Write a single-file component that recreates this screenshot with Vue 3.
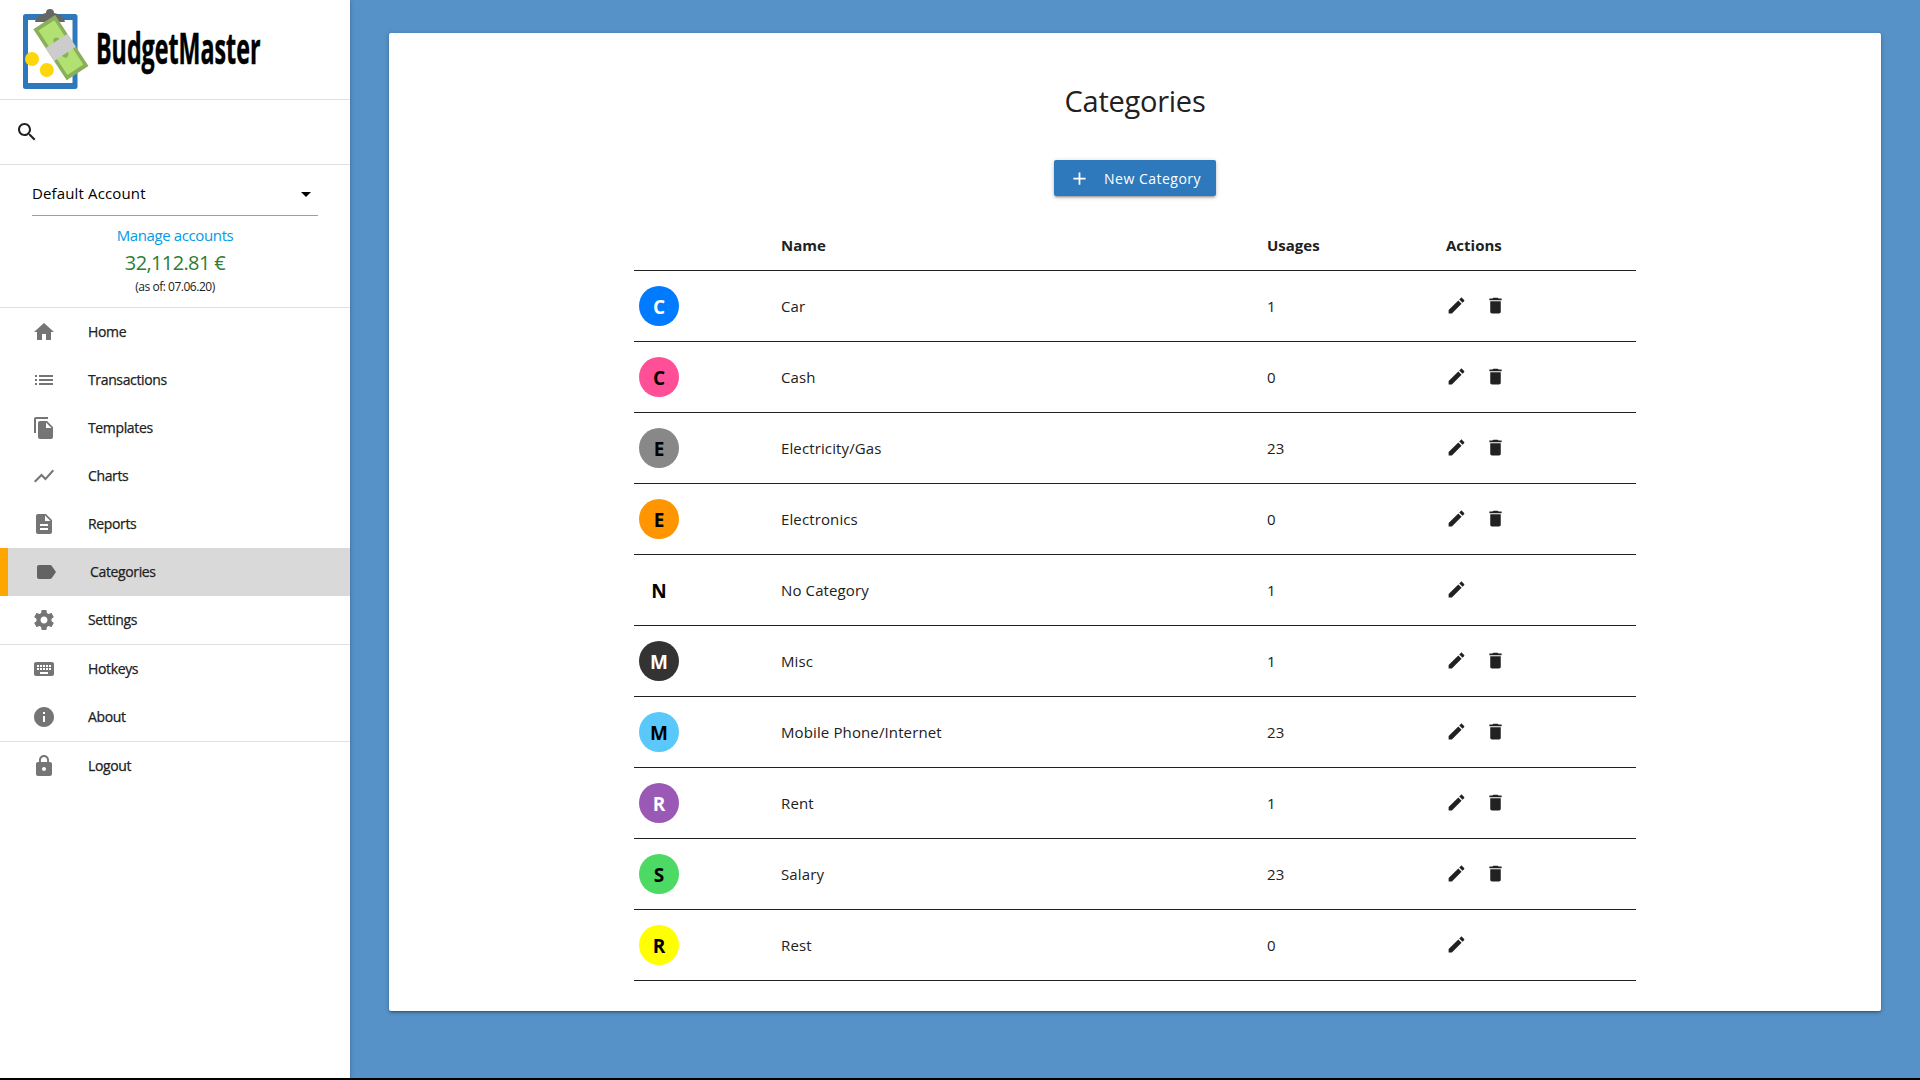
<script setup>
const nav = [
  [
    { label: 'Home', d: 'M10 20v-6h4v6h5v-8h3L12 3 2 12h3v8z' },
    { label: 'Transactions', d: 'M3 13h2v-2H3v2zm0 4h2v-2H3v2zm0-8h2V7H3v2zm4 4h14v-2H7v2zm0 4h14v-2H7v2zM7 7v2h14V7H7z' },
    { label: 'Templates', d: 'M16 1H4c-1.1 0-2 .9-2 2v14h2V3h12V1zm-1 4l6 6v10c0 1.1-.9 2-2 2H7.99C6.89 23 6 22.1 6 21l.01-14c0-1.1.89-2 1.99-2h7zm-1 7h5.5L14 6.5V12z' },
    { label: 'Charts', d: 'M3.5 18.49l6-6.01 4 4L22 6.92l-1.41-1.41-7.09 7.97-4-4L2 16.99z' },
    { label: 'Reports', d: 'M14 2H6c-1.1 0-1.99.9-1.99 2L4 20c0 1.1.89 2 1.99 2H18c1.1 0 2-.9 2-2V8l-6-6zm2 16H8v-2h8v2zm0-4H8v-2h8v2zm-3-5V3.5L18.5 9H13z' },
    { label: 'Categories', active: true, d: 'M17.63 5.84C17.27 5.33 16.67 5 16 5L5 5.01C3.9 5.01 3 5.9 3 7v10c0 1.1.9 1.99 2 1.99L16 19c.67 0 1.27-.33 1.63-.84L22 12l-4.37-6.16z' },
    { label: 'Settings', d: 'M19.43 12.98c.04-.32.07-.64.07-.98s-.03-.66-.07-.98l2.11-1.65c.19-.15.24-.42.12-.64l-2-3.46c-.12-.22-.39-.3-.61-.22l-2.49 1c-.52-.4-1.08-.73-1.69-.98l-.38-2.65C14.46 2.18 14.25 2 14 2h-4c-.25 0-.46.18-.49.42l-.38 2.65c-.61.25-1.17.59-1.69.98l-2.49-1c-.23-.09-.49 0-.61.22l-2 3.46c-.13.22-.07.49.12.64l2.11 1.65c-.04.32-.07.65-.07.98s.03.66.07.98l-2.11 1.65c-.19.15-.24.42-.12.64l2 3.46c.12.22.39.3.61.22l2.49-1c.52.4 1.08.73 1.69.98l.38 2.65c.03.24.24.42.49.42h4c.25 0 .46-.18.49-.42l.38-2.65c.61-.25 1.17-.59 1.69-.98l2.49 1c.23.09.49 0 .61-.22l2-3.46c.12-.22.07-.49-.12-.64l-2.11-1.65zM12 15.5c-1.93 0-3.5-1.57-3.5-3.5s1.57-3.5 3.5-3.5 3.5 1.57 3.5 3.5-1.57 3.5-3.5 3.5z' }
  ],
  [
    { label: 'Hotkeys', d: 'M20 5H4c-1.1 0-1.99.9-1.99 2L2 17c0 1.1.9 2 2 2h16c1.1 0 2-.9 2-2V7c0-1.1-.9-2-2-2zm-9 3h2v2h-2V8zm0 3h2v2h-2v-2zM8 8h2v2H8V8zm0 3h2v2H8v-2zm-1 2H5v-2h2v2zm0-3H5V8h2v2zm9 7H8v-2h8v2zm0-4h-2v-2h2v2zm0-3h-2V8h2v2zm3 3h-2v-2h2v2zm0-3h-2V8h2v2z' },
    { label: 'About', d: 'M12 2C6.48 2 2 6.48 2 12s4.48 10 10 10 10-4.48 10-10S17.52 2 12 2zm1 15h-2v-6h2v6zm0-8h-2V7h2v2z' }
  ],
  [
    { label: 'Logout', d: 'M18 8h-1V6c0-2.76-2.24-5-5-5S7 3.24 7 6v2H6c-1.1 0-2 .9-2 2v10c0 1.1.9 2 2 2h12c1.1 0 2-.9 2-2V10c0-1.1-.9-2-2-2zm-6 9c-1.1 0-2-.9-2-2s.9-2 2-2 2 .9 2 2-.9 2-2 2zm3.1-9H8.9V6c0-1.71 1.39-3.1 3.1-3.1s3.1 1.39 3.1 3.1v2z' }
  ]
]
const categories = [
  { name: 'Car', usages: 1, color: '#007aff', text: '#fff', removable: true },
  { name: 'Cash', usages: 0, color: '#ff5097', text: '#000', removable: true },
  { name: 'Electricity/Gas', usages: 23, color: '#888888', text: '#000', removable: true },
  { name: 'Electronics', usages: 0, color: '#ff9500', text: '#000', removable: true },
  { name: 'No Category', usages: 1, color: '#ffffff', text: '#000', removable: false },
  { name: 'Misc', usages: 1, color: '#333333', text: '#fff', removable: true },
  { name: 'Mobile Phone/Internet', usages: 23, color: '#5ac8fa', text: '#000', removable: true },
  { name: 'Rent', usages: 1, color: '#9b59b6', text: '#fff', removable: true },
  { name: 'Salary', usages: 23, color: '#4cd964', text: '#000', removable: true },
  { name: 'Rest', usages: 0, color: '#ffff00', text: '#000', removable: false }
]
</script>

<template>
  <div class="app">
    <aside class="sidebar">
      <div class="brand">
        <svg class="logo" width="350" height="99" viewBox="0 0 350 99">
          <rect x="23" y="14" width="54.500" height="75" rx="2.500" fill="#2e79bb" />
          <rect x="28" y="20" width="44.500" height="63" fill="#fff" />
          <path d="M35 22c1-5 5-8 11-9a4 4 0 0 1 8 0c6 1 10 4 11 9z" fill="#666" />
          <g transform="translate(60.900 47.600) rotate(-33.100)">
            <rect x="-13" y="-30.500" width="26" height="61" fill="#8bae5a" />
            <rect x="-9.500" y="-26.500" width="19" height="53" fill="#b1e172" />
            <ellipse cx="0" cy="0" rx="5" ry="11.500" fill="#8bae5a" />
            <rect x="-13" y="-8" width="26" height="15.500" fill="#ccc" />
          </g>
          <circle cx="32" cy="59" r="7" fill="#ffd60b" />
          <circle cx="46.800" cy="70" r="7" fill="#ffd60b" />
          <text transform="translate(96 64) scale(.541 1)" class="wordmark">BudgetMaster</text>
        </svg>
      </div>
      <div class="search">
        <svg width="24" height="24" viewBox="0 0 24 24"><path d="M15.500 14h-.79l-.28-.27C15.410 12.590 16 11.110 16 9.500 16 5.910 13.090 3 9.500 3S3 5.910 3 9.500 5.910 16 9.500 16c1.610 0 3.090-.59 4.230-1.570l.27.28v.79l5 4.990L20.490 19l-4.990-5zm-6 0C7.010 14 5 11.990 5 9.500S7.010 5 9.500 5 14 7.010 14 9.500 11.990 14 9.500 14z" /></svg>
      </div>
      <div class="account">
        <div class="select"><span>Default Account</span><svg width="24" height="24" viewBox="0 0 24 24"><path d="M7 10l5 5 5-5z" /></svg></div>
        <a class="manage">Manage accounts</a>
        <div class="balance">32,112.81 €</div>
        <div class="date">(as of: 07.06.20)</div>
      </div>
      <nav>
        <ul v-for="(group, i) in nav" :key="i">
          <li v-for="item in group" :key="item.label" :class="{ active: item.active }">
            <svg width="24" height="24" viewBox="0 0 24 24"><path :d="item.d" /></svg>
            <span>{{ item.label }}</span>
          </li>
        </ul>
      </nav>
    </aside>
    <main>
      <section class="card">
        <h1>Categories</h1>
        <button class="new"><svg width="21" height="21" viewBox="0 0 24 24"><path d="M19 13h-6v6h-2v-6H5v-2h6V5h2v6h6v2z" /></svg><span>New Category</span></button>
        <table>
          <thead><tr><th class="c-icon"></th><th class="c-name">Name</th><th class="c-use">Usages</th><th>Actions</th></tr></thead>
          <tbody>
            <tr v-for="cat in categories" :key="cat.name">
              <td><div class="circle" :style="{ background: cat.color, color: cat.text }">{{ cat.name[0] }}</div></td>
              <td>{{ cat.name }}</td>
              <td>{{ cat.usages }}</td>
              <td>
                <div class="actions">
                  <svg width="21" height="21" viewBox="0 0 24 24"><path d="M3 17.250V21h3.750L17.810 9.940l-3.750-3.750L3 17.250zM20.710 7.040c.39-.39.39-1.020 0-1.410l-2.340-2.340c-.39-.39-1.020-.39-1.410 0l-1.830 1.830 3.750 3.750 1.830-1.830z" /></svg>
                  <svg v-if="cat.removable" width="21" height="21" viewBox="0 0 24 24"><path d="M6 19c0 1.100.9 2 2 2h8c1.100 0 2-.9 2-2V7H6v12zM19 4h-3.500l-1-1h-5l-1 1H5v2h14V4z" /></svg>
                </div>
              </td>
            </tr>
          </tbody>
        </table>
      </section>
    </main>
  </div>
</template>

<style>
body { background: #5691c7; }
</style>
<style scoped>
.app { display: flex; box-sizing: border-box; width: 1920px; height: 1080px; border-bottom: 2px solid #000; overflow: hidden; background: #5691c7; color: #212121; font: 15px/1.5 "Open Sans", "Noto Sans", sans-serif; }
.sidebar { flex: none; width: 350px; background: #fff; box-shadow: 0 2px 2px 0 rgba(0,0,0,.14), 0 3px 1px -2px rgba(0,0,0,.12), 0 1px 5px 0 rgba(0,0,0,.2); }
svg { display: block; fill: currentColor; flex: none; }
.brand { height: 99px; border-bottom: 1px solid #e0e0e0; }
.wordmark { font: bold 43px "Open Sans", sans-serif; fill: #000; stroke: #000; stroke-width: .5px; }
.search { height: 64px; border-bottom: 1px solid #e0e0e0; display: flex; align-items: center; padding-left: 15px; }
.account { height: 142px; border-bottom: 1px solid #e0e0e0; text-align: center; }
.select { display: flex; justify-content: space-between; align-items: center; height: 43px; margin: 0 32px; padding-top: 7px; border-bottom: 1px solid #9e9e9e; color: #000; letter-spacing: .14px; }
.manage { display: block; margin-top: 8px; line-height: 23px; color: #039be5; letter-spacing: -.38px; }
.balance { font-size: 20px; line-height: 32px; color: #2e7d32; letter-spacing: -.62px; }
.date { font-size: 12px; line-height: 15px; letter-spacing: -.48px; }
ul { list-style: none; margin: 0; padding: 0; }
ul + ul { border-top: 1px solid #e0e0e0; }
li { display: flex; align-items: center; height: 48px; padding-left: 32px; font-size: 14px; font-weight: 500; letter-spacing: -.36px; -webkit-text-stroke: .25px #212121; }
li svg { color: #757575; margin-right: 32px; }
li span { padding-bottom: 2px; }
li.active { background: #d9d9d9; border-left: 8px solid #ffa500; padding-left: 26px; }
li.active svg { color: #636363; }
main { flex: 1; padding: 33px 39px; }
.card { height: 978px; background: #fff; border-radius: 2px; box-shadow: 0 2px 2px 0 rgba(0,0,0,.14), 0 3px 1px -2px rgba(0,0,0,.12), 0 1px 5px 0 rgba(0,0,0,.2); display: flex; flex-direction: column; align-items: center; }
h1 { margin: 48px 0 0; font-size: 29px; font-weight: 400; line-height: 40px; letter-spacing: -.25px; }
.new { display: flex; align-items: center; width: 162px; height: 36px; margin: 39px 0 25px; padding: 0 0 0 15px; border: 0; border-radius: 2px; background: #2e79bb; color: #fff; font: 500 14px "Open Sans", sans-serif; letter-spacing: .5px; box-shadow: 0 2px 2px 0 rgba(0,0,0,.14), 0 3px 1px -2px rgba(0,0,0,.12), 0 1px 5px 0 rgba(0,0,0,.2); }
.new span { margin-left: 14px; white-space: nowrap; }
table { width: 1002px; border-collapse: collapse; table-layout: fixed; }
tr { border-bottom: 1px solid #212121; }
th { height: 49px; padding: 0 0 0 5px; text-align: left; }
td { height: 70px; padding: 0 0 0 5px; letter-spacing: .12px; }
.c-icon { width: 137px; } .c-name { width: 481px; } .c-use { width: 174px; }
.circle { width: 40px; height: 40px; border-radius: 50%; text-align: center; line-height: 42px; font-size: 19px; font-weight: 700; letter-spacing: 0; }
.actions { display: flex; gap: 18px; margin: -1px 0 0 -.5px; }
</style>
